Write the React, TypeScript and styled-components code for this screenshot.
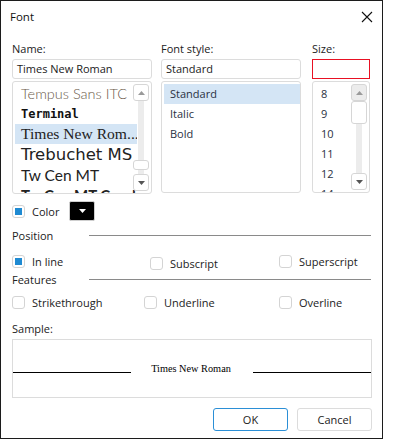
import * as React from 'react'
import styled, { createGlobalStyle, css } from 'styled-components'

const GlobalStyle = createGlobalStyle`
  html, body {
    margin: 0;
    padding: 0;
    background: #fff;
  }
  body {
    font-family: "Open Sans", "Noto Sans", sans-serif;
    font-size: 11px;
    color: #222;
  }
`

const Window = styled.div`
  width: 381px;
  height: 437px;
  border: 1px solid #1c1c1c;
  background: #fff;
  display: flex;
  flex-direction: column;
`

const TitleBar = styled.div`
  height: 31px;
  display: flex;
  align-items: center;
  justify-content: space-between;
  padding: 0 9px 0 9px;
  font-size: 11.5px;
  color: #111;
`

const Body = styled.div`
  padding: 9px 10px 0 11px;
  display: flex;
  flex-direction: column;
`

const Columns = styled.div`
  display: grid;
  grid-template-columns: 140px 140px 60px;
  column-gap: 9px;
  & > :nth-child(3) {
    margin-left: 2px;
  }
`

const Column = styled.div`
  display: flex;
  flex-direction: column;
`

const Label = styled.div`
  height: 16px;
  line-height: 16px;
  margin-bottom: 2px;
  white-space: nowrap;
`

const Input = styled.div<{ $error?: boolean }>`
  height: 18px;
  border: 1px solid ${p => (p.$error ? '#e81123' : '#dcdcdc')};
  border-radius: ${p => (p.$error ? '0' : '3px')};
  padding: 0 4px;
  line-height: 18px;
  display: flex;
  align-items: center;
`

const List = styled.div<{ $h: number }>`
  position: relative;
  margin-top: 2px;
  height: ${p => p.$h}px;
  border: 1px solid #dcdcdc;
  border-radius: 3px;
  overflow: hidden;
  padding: 2px 0 0 2px;
`

const Item = styled.div<{ $active?: boolean; $pad?: number; $h?: number }>`
  height: ${p => p.$h ?? 20}px;
  line-height: ${p => p.$h ?? 20}px;
  padding-left: ${p => p.$pad ?? 6}px;
  white-space: nowrap;
  overflow: hidden;
  color: #2a3142;
  ${p => p.$active && css`background: #d4e5f5;`}
`

const Scroll = styled.div`
  position: absolute;
  top: 2px;
  right: 2px;
  bottom: 2px;
  width: 16px;
  display: flex;
  flex-direction: column;
  align-items: center;
`

const Track = styled.div`
  flex: 1;
  width: 6px;
  background: #ececec;
  position: relative;
`

const Thumb = styled.div<{ $top: number; $h: number }>`
  position: absolute;
  left: -5px;
  width: 14px;
  top: ${p => p.$top}px;
  height: ${p => p.$h}px;
  border: 1px solid #d6d6d6;
  border-radius: 3px;
  background: #fff;
`

const ArrowBtn = styled.div<{ $filled?: boolean }>`
  width: 14px;
  height: 15px;
  border: 1px solid #d6d6d6;
  border-radius: 3px;
  background: ${p => (p.$filled ? '#ececec' : '#fff')};
  display: flex;
  align-items: center;
  justify-content: center;
`

const Row = styled.div`
  display: flex;
  align-items: center;
`

const CheckBox = styled.span<{ $on?: boolean }>`
  width: 11px;
  height: 11px;
  border: 1px solid #d4d4d4;
  border-radius: 3px;
  display: inline-flex;
  align-items: center;
  justify-content: center;
  background: #fff;
  flex: none;
  &::after {
    content: '';
    width: 7px;
    height: 7px;
    background: ${p => (p.$on ? '#1f8ad2' : 'transparent')};
  }
`

const Check = styled.label<{ $w?: number }>`
  display: flex;
  align-items: center;
  gap: 7px;
  width: ${p => (p.$w ? `${p.$w}px` : 'auto')};
`

const ColorBtn = styled.div`
  width: 24px;
  height: 18px;
  margin-left: 10px;
  border: 1px solid #cfcfcf;
  border-radius: 2px;
  background: #000;
  box-shadow: inset 0 0 0 1px #000;
  display: flex;
  align-items: center;
  justify-content: center;
`

const GroupHead = styled.div`
  display: flex;
  align-items: center;
  height: 16px;
`

const GroupTitle = styled.span`
  width: 77px;
  flex: none;
`

const GroupLine = styled.div`
  flex: 1;
  height: 1px;
  background: #8a8a8a;
  margin-right: 1px;
`

const OptionRow = styled.div`
  display: flex;
  align-items: center;
  height: 20px;
`

const SampleBox = styled.div`
  height: 59px;
  box-sizing: border-box;
  border: 1px solid #dcdcdc;
  display: flex;
  align-items: flex-start;
  padding-top: 22px;
`

const SampleLine = styled.div`
  flex: 1;
  height: 1px;
  background: #000;
  margin-top: 10px;
`

const SampleText = styled.span`
  font-family: "Liberation Serif", serif;
  font-size: 10.3px;
  line-height: 14px;
  color: #000;
  padding: 0 22px 0 20px;
`

const Buttons = styled.div`
  display: flex;
  justify-content: flex-end;
  gap: 9px;
  margin-top: 10px;
`

const Button = styled.button<{ $primary?: boolean }>`
  width: 75px;
  height: 23px;
  border: 1px solid ${p => (p.$primary ? '#2b8fd6' : '#dcdcdc')};
  border-radius: 3px;
  background: #fff;
  font-family: inherit;
  font-size: 11px;
  color: #222;
  padding: 0;
`

const Up = () => (
  <svg width="7" height="4" viewBox="0 0 7 4"><path d="M0 4 L3.5 0 L7 4 Z" fill="#9a9a9a" /></svg>
)
const Down = ({ c = '#555' }: { c?: string }) => (
  <svg width="7" height="4" viewBox="0 0 7 4"><path d="M0 0 L7 0 L3.5 4 Z" fill={c} /></svg>
)

const fonts = [
  { t: 'Tempus Sans ITC', f: '"Lato", sans-serif', s: 14.5, c: '#6b5a4a', w: 300, h: 20 },
  { t: 'Terminal', f: '"DejaVu Sans Mono", monospace', s: 12, c: '#111', w: 700, h: 20 },
  { t: 'Times New Rom...', f: '"Liberation Serif", serif', s: 15.6, c: '#222', w: 400, h: 20, active: true },
  { t: 'Trebuchet MS', f: '"DejaVu Sans", sans-serif', s: 16.5, c: '#222', w: 400, h: 21 },
  { t: 'Tw Cen MT', f: '"Lato", sans-serif', s: 15.5, c: '#222', w: 400, h: 20 },
  { t: 'Tw Cen MT Condensed', f: '"Lato", sans-serif', s: 15, c: '#222', w: 700, h: 20 },
]

export default function App() {
  return (
    <>
      <GlobalStyle />
      <Window>
        <TitleBar>
          <span>Font</span>
          <svg width="12" height="12" viewBox="0 0 12 12">
            <path d="M1 1 L11 11 M11 1 L1 11" stroke="#111" strokeWidth="1.1" />
          </svg>
        </TitleBar>
        <Body>
          <Columns>
            <Column>
              <Label>Name:</Label>
              <Input>Times New Roman</Input>
              <List $h={109}>
                {fonts.map((it, i) => (
                  <Item
                    key={i}
                    $active={it.active}
                    $pad={6}
                    $h={it.h}
                    style={{ fontFamily: it.f, fontSize: it.s, color: it.c, fontWeight: it.w, width: 116 }}
                  >
                    {it.t}
                  </Item>
                ))}
                <Scroll>
                  <ArrowBtn><Up /></ArrowBtn>
                  <Track><Thumb $top={59} $h={8} /></Track>
                  <ArrowBtn><Down /></ArrowBtn>
                </Scroll>
              </List>
            </Column>
            <Column>
              <Label>Font style:</Label>
              <Input>Standard</Input>
              <List $h={108}>
                {['Standard', 'Italic', 'Bold'].map((s, i) => (
                  <Item key={s} $active={i === 0}>{s}</Item>
                ))}
              </List>
            </Column>
            <Column>
              <Label>Size:</Label>
              <Input $error />
              <List $h={108}>
                {['8', '9', '10', '11', '12', '14'].map(s => (
                  <Item key={s} $pad={6}>{s}</Item>
                ))}
                <Scroll>
                  <ArrowBtn $filled><Up /></ArrowBtn>
                  <Track><Thumb $top={0} $h={21} /></Track>
                  <ArrowBtn><Down /></ArrowBtn>
                </Scroll>
              </List>
            </Column>
          </Columns>

          <Row style={{ marginTop: 7 }}>
            <Check>
              <CheckBox $on />
              <span>Color</span>
            </Check>
            <ColorBtn><Down c="#fff" /></ColorBtn>
          </Row>

          <GroupHead style={{ marginTop: 6 }}>
            <GroupTitle>Position</GroupTitle>
            <GroupLine />
          </GroupHead>
          <OptionRow style={{ marginTop: 8 }}>
            <Check $w={138}>
              <CheckBox $on />
              <span>In line</span>
            </Check>
            <Check $w={129} style={{ marginTop: 4 }}>
              <CheckBox />
              <span>Subscript</span>
            </Check>
            <Check>
              <CheckBox />
              <span>Superscript</span>
            </Check>
          </OptionRow>

          <GroupHead style={{ marginTop: 0 }}>
            <GroupTitle>Features</GroupTitle>
            <GroupLine />
          </GroupHead>
          <OptionRow style={{ marginTop: 5 }}>
            <Check $w={132}>
              <CheckBox />
              <span>Strikethrough</span>
            </Check>
            <Check $w={135}>
              <CheckBox />
              <span>Underline</span>
            </Check>
            <Check>
              <CheckBox />
              <span>Overline</span>
            </Check>
          </OptionRow>

          <Label style={{ marginTop: 9 }}>Sample:</Label>
          <SampleBox>
            <SampleLine />
            <SampleText>Times New Roman</SampleText>
            <SampleLine />
          </SampleBox>

          <Buttons>
            <Button $primary>OK</Button>
            <Button>Cancel</Button>
          </Buttons>
        </Body>
      </Window>
    </>
  )
}
